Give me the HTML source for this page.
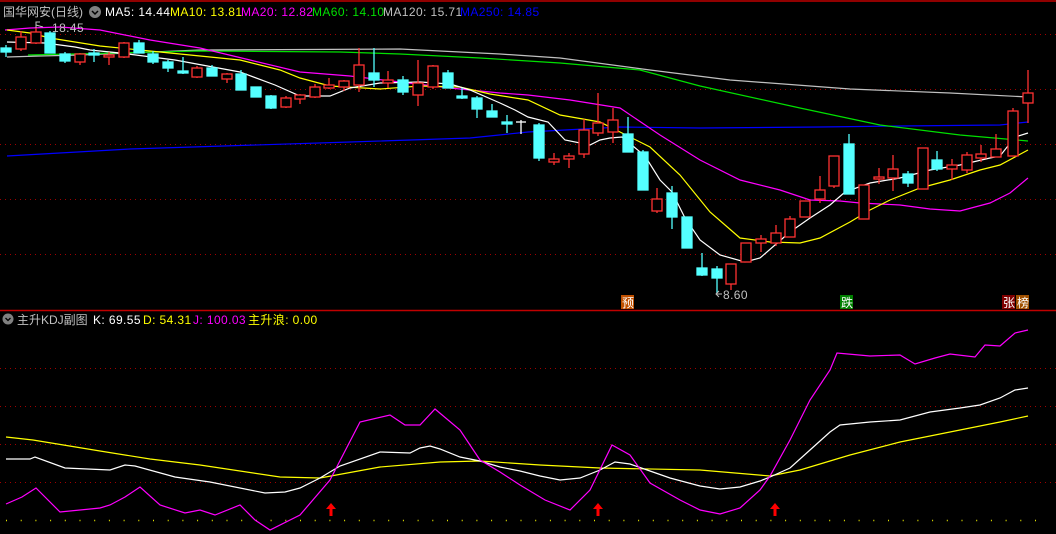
<!DOCTYPE html>
<html><head><meta charset="utf-8"><style>
html,body{margin:0;padding:0;background:#000;width:1056px;height:534px;overflow:hidden}
svg{display:block}
text{font-family:"Liberation Sans","Noto Sans CJK SC",sans-serif;font-size:12px;letter-spacing:0.4px}
</style></head><body>
<svg width="1056" height="534" viewBox="0 0 1056 534">
<rect width="1056" height="534" fill="#000"/>
<line x1="0" y1="1" x2="1056" y2="1" stroke="#c00000" stroke-width="1.5"/>
<line x1="0" y1="310.5" x2="1056" y2="310.5" stroke="#c00000" stroke-width="1.5"/>
<g stroke="#a00000" stroke-dasharray="1,4" stroke-width="1">
<line x1="0" y1="34.5" x2="1056" y2="34.5"/><line x1="0" y1="89.5" x2="1056" y2="89.5"/><line x1="0" y1="144.5" x2="1056" y2="144.5"/><line x1="0" y1="199.5" x2="1056" y2="199.5"/><line x1="0" y1="254.5" x2="1056" y2="254.5"/>
<line x1="0" y1="368.5" x2="1056" y2="368.5"/><line x1="0" y1="406.5" x2="1056" y2="406.5"/><line x1="0" y1="444.5" x2="1056" y2="444.5"/><line x1="0" y1="482.5" x2="1056" y2="482.5"/>
</g>
<line x1="6" y1="520.5" x2="1040" y2="520.5" stroke="#e0e000" stroke-dasharray="1,13.7" stroke-width="1.5"/>

<g fill="none" stroke-width="1.2">
<polyline stroke="#0000ff" points="7,156 130,149 350,142 470,138 528,132 620,127 700,128 820,127 900,126 1000,125 1028,122"/>
<polyline stroke="#c0c0c0" points="7,57 40,56 80,55 200,50 400,49 500,54 560,58 650,70 730,80 850,89 950,93 1028,97"/>
<polyline stroke="#00e000" points="28,55 200,51 340,52 400,54 480,58 560,63 640,70 700,86 800,108 880,125 960,135 1028,141"/>
<polyline stroke="#ff00ff" points="5,30 30,28 60,27 100,30 150,40 200,48 250,60 300,72 350,76 400,82 450,88 500,93 528,95 570,100 620,108 660,135 700,160 740,180 780,190 810,200 840,201 860,203 900,205 930,209 960,211 990,203 1010,193 1028,178"/>
<polyline stroke="#ffff00" points="7,30 30,33 50,38 100,46 160,52 240,60 280,70 300,78 330,86 380,89 420,86 460,87 490,94 528,100 560,115 600,122 620,132 650,147 680,175 710,212 740,238 770,242 800,243 820,238 850,222 870,210 890,200 920,188 950,180 980,170 1000,165 1028,150"/>
<polyline stroke="#ffffff" points="7,42 45,43 75,47 90,50 120,53 175,60 240,72 275,85 300,96 330,96 350,88 380,83 420,82 450,84 470,90 500,103 515,110 528,117 548,122 565,140 590,145 600,140 610,138 622,137 645,156 660,180 672,192 685,218 700,240 720,255 745,262 760,258 790,232 810,218 830,205 845,192 870,183 900,178 930,170 960,165 990,158 1000,156 1015,137 1028,133"/>
</g>

<g stroke-width="1.3">
<g stroke="#54ffff" fill="#54ffff">
<line x1="6" y1="45" x2="6" y2="57"/><rect x="1" y="48" width="10" height="4"/>
<line x1="50" y1="31" x2="50" y2="53"/><rect x="45" y="33" width="10" height="20"/>
<line x1="65" y1="52" x2="65" y2="63"/><rect x="60" y="54" width="10" height="7"/>
<line x1="94" y1="49" x2="94" y2="62"/><rect x="89" y="53" width="10" height="2"/>
<line x1="139" y1="40" x2="139" y2="53"/><rect x="134" y="43" width="10" height="10"/>
<line x1="153" y1="51" x2="153" y2="64"/><rect x="148" y="54" width="10" height="8"/>
<line x1="168" y1="60" x2="168" y2="72"/><rect x="163" y="62" width="10" height="6"/>
<line x1="183" y1="57" x2="183" y2="74"/><rect x="178" y="71" width="10" height="2"/>
<line x1="212" y1="65" x2="212" y2="76"/><rect x="207" y="68" width="10" height="8"/>
<line x1="241" y1="70" x2="241" y2="90"/><rect x="236" y="74" width="10" height="16"/>
<line x1="256" y1="87" x2="256" y2="97"/><rect x="251" y="87" width="10" height="10"/>
<line x1="271" y1="95" x2="271" y2="109"/><rect x="266" y="96" width="10" height="12"/>
<line x1="374" y1="48" x2="374" y2="87"/><rect x="369" y="73" width="10" height="7"/>
<line x1="403" y1="76" x2="403" y2="95"/><rect x="398" y="80" width="10" height="12"/>
<line x1="448" y1="70" x2="448" y2="88"/><rect x="443" y="73" width="10" height="15"/>
<line x1="462" y1="88" x2="462" y2="99"/><rect x="457" y="96" width="10" height="2"/>
<line x1="477" y1="96" x2="477" y2="118"/><rect x="472" y="98" width="10" height="11"/>
<line x1="492" y1="104" x2="492" y2="117"/><rect x="487" y="111" width="10" height="6"/>
<line x1="507" y1="115" x2="507" y2="133"/><rect x="502" y="122" width="10" height="2"/>
<line x1="539" y1="123" x2="539" y2="161"/><rect x="534" y="125" width="10" height="33"/>
<line x1="628" y1="117" x2="628" y2="152"/><rect x="623" y="134" width="10" height="18"/>
<line x1="643" y1="150" x2="643" y2="190"/><rect x="638" y="152" width="10" height="38"/>
<line x1="672" y1="186" x2="672" y2="229"/><rect x="667" y="193" width="10" height="24"/>
<line x1="687" y1="217" x2="687" y2="248"/><rect x="682" y="217" width="10" height="31"/>
<line x1="702" y1="253" x2="702" y2="276"/><rect x="697" y="268" width="10" height="7"/>
<line x1="717" y1="266" x2="717" y2="293"/><rect x="712" y="269" width="10" height="9"/>
<line x1="849" y1="134" x2="849" y2="194"/><rect x="844" y="144" width="10" height="50"/>
<line x1="908" y1="171" x2="908" y2="187"/><rect x="903" y="174" width="10" height="9"/>
<line x1="937" y1="151" x2="937" y2="171"/><rect x="932" y="160" width="10" height="9"/>
</g>
<g stroke="#ffffff"><line x1="521" y1="120" x2="521" y2="134"/><line x1="516" y1="122" x2="526" y2="122"/></g>
<g stroke="#ff3232" fill="#000">
<line x1="21" y1="31" x2="21" y2="51"/><rect x="16" y="37" width="10" height="12"/>
<line x1="36" y1="28" x2="36" y2="44"/><rect x="31" y="32" width="10" height="11"/>
<line x1="80" y1="53" x2="80" y2="65"/><rect x="75" y="54" width="10" height="8"/>
<line x1="109" y1="52" x2="109" y2="65"/><rect x="104" y="55" width="10" height="2"/>
<line x1="124" y1="42" x2="124" y2="58"/><rect x="119" y="43" width="10" height="14"/>
<line x1="197" y1="66" x2="197" y2="78"/><rect x="192" y="68" width="10" height="9"/>
<line x1="227" y1="73" x2="227" y2="83"/><rect x="222" y="74" width="10" height="5"/>
<line x1="286" y1="96" x2="286" y2="108"/><rect x="281" y="98" width="10" height="9"/>
<line x1="300" y1="94" x2="300" y2="104"/><rect x="295" y="95" width="10" height="4"/>
<line x1="315" y1="84" x2="315" y2="98"/><rect x="310" y="87" width="10" height="10"/>
<line x1="329" y1="78" x2="329" y2="89"/><rect x="324" y="85" width="10" height="3"/>
<line x1="344" y1="80" x2="344" y2="91"/><rect x="339" y="81" width="10" height="6"/>
<line x1="359" y1="48" x2="359" y2="92"/><rect x="354" y="65" width="10" height="20"/>
<line x1="388" y1="71" x2="388" y2="88"/><rect x="383" y="80" width="10" height="3"/>
<line x1="418" y1="60" x2="418" y2="106"/><rect x="413" y="83" width="10" height="12"/>
<line x1="433" y1="65" x2="433" y2="89"/><rect x="428" y="66" width="10" height="21"/>
<line x1="554" y1="153" x2="554" y2="165"/><rect x="549" y="159" width="10" height="3"/>
<line x1="569" y1="153" x2="569" y2="168"/><rect x="564" y="156" width="10" height="3"/>
<line x1="584" y1="119" x2="584" y2="158"/><rect x="579" y="130" width="10" height="24"/>
<line x1="598" y1="93" x2="598" y2="136"/><rect x="593" y="123" width="10" height="10"/>
<line x1="613" y1="108" x2="613" y2="143"/><rect x="608" y="120" width="10" height="12"/>
<line x1="657" y1="188" x2="657" y2="213"/><rect x="652" y="199" width="10" height="12"/>
<line x1="731" y1="264" x2="731" y2="290"/><rect x="726" y="264" width="10" height="20"/>
<line x1="746" y1="243" x2="746" y2="262"/><rect x="741" y="243" width="10" height="19"/>
<line x1="761" y1="235" x2="761" y2="252"/><rect x="756" y="239" width="10" height="4"/>
<line x1="776" y1="225" x2="776" y2="246"/><rect x="771" y="233" width="10" height="10"/>
<line x1="790" y1="216" x2="790" y2="237"/><rect x="785" y="219" width="10" height="18"/>
<line x1="805" y1="201" x2="805" y2="217"/><rect x="800" y="201" width="10" height="16"/>
<line x1="820" y1="176" x2="820" y2="203"/><rect x="815" y="190" width="10" height="9"/>
<line x1="834" y1="156" x2="834" y2="188"/><rect x="829" y="156" width="10" height="30"/>
<line x1="864" y1="185" x2="864" y2="219"/><rect x="859" y="185" width="10" height="34"/>
<line x1="879" y1="168" x2="879" y2="184"/><rect x="874" y="177" width="10" height="2"/>
<line x1="893" y1="155" x2="893" y2="191"/><rect x="888" y="169" width="10" height="9"/>
<line x1="923" y1="148" x2="923" y2="189"/><rect x="918" y="148" width="10" height="41"/>
<line x1="952" y1="159" x2="952" y2="180"/><rect x="947" y="165" width="10" height="4"/>
<line x1="967" y1="152" x2="967" y2="173"/><rect x="962" y="155" width="10" height="15"/>
<line x1="981" y1="145" x2="981" y2="162"/><rect x="976" y="154" width="10" height="4"/>
<line x1="996" y1="134" x2="996" y2="157"/><rect x="991" y="149" width="10" height="8"/>
<line x1="1013" y1="108" x2="1013" y2="156"/><rect x="1008" y="111" width="10" height="45"/>
<line x1="1028" y1="70" x2="1028" y2="123"/><rect x="1023" y="93" width="10" height="10"/>
</g>
</g>

<text x="3" y="16" fill="#c0c0c0" style="letter-spacing:0">国华网安(日线)</text>
<circle cx="95" cy="12" r="6" fill="#808080"/><path d="M92,11 L95,14 L98,11" stroke="#000" stroke-width="1.5" fill="none"/>
<text x="105" y="16" fill="#ffffff">MA5: 14.44</text>
<text x="170" y="16" fill="#ffff00">MA10: 13.81</text>
<text x="241" y="16" fill="#ff00ff">MA20: 12.82</text>
<text x="312" y="16" fill="#00e000">MA60: 14.10</text>
<text x="383" y="16" fill="#c0c0c0">MA120: 15.71</text>
<text x="460" y="16" fill="#0000ff">MA250: 14.85</text>
<path d="M36,28 L36,22 L40,22 M36,25 L43,27" stroke="#c0c0c0" fill="none"/>
<text x="52" y="32" fill="#c0c0c0">18.45</text>
<path d="M722,294 L716,294 M719,291 L716,294 L719,297" stroke="#c0c0c0" fill="none"/>
<text x="723" y="299" fill="#c0c0c0">8.60</text>
<rect x="621" y="295" width="13" height="14" fill="#c05000"/><text x="622" y="307" fill="#fff" style="letter-spacing:0">预</text>
<rect x="840" y="295" width="13" height="14" fill="#008000"/><text x="841" y="307" fill="#fff" style="letter-spacing:0">跌</text>
<rect x="1002" y="295" width="13" height="14" fill="#800000"/><text x="1003" y="307" fill="#fff" style="letter-spacing:0">张</text>
<rect x="1016" y="295" width="13" height="14" fill="#a05000"/><text x="1017" y="307" fill="#fff" style="letter-spacing:0">榜</text>

<circle cx="8" cy="319" r="5.5" fill="#808080"/><path d="M5.5,318 L8,320.5 L10.5,318" stroke="#000" stroke-width="1.3" fill="none"/>
<text x="17" y="324" fill="#c0c0c0" style="letter-spacing:0">主升KDJ副图</text>
<text x="93" y="324" fill="#ffffff">K: 69.55</text>
<text x="143" y="324" fill="#ffff00">D: 54.31</text>
<text x="193" y="324" fill="#ff00ff">J: 100.03</text>
<text x="248" y="324" fill="#ffff00">主升浪: 0.00</text>

<g fill="none" stroke-width="1.2">
<polyline stroke="#ffff00" points="6,437 33,440 100,451 150,459 200,465 280,477 320,478 380,467 440,462 480,461 540,465 600,468 700,470 770,476 800,470 850,455 900,442 950,432 1000,422 1028,416"/>
<polyline stroke="#ffffff" points="6,459 30,459 35,457 65,468 110,470 125,465 135,466 175,477 210,482 265,493 285,492 300,488 320,478 340,466 380,452 410,453 420,448 430,446 440,449 460,457 480,461 500,467 520,471 540,476 560,480 580,478 600,470 615,462 630,464 650,471 670,478 700,486 720,489 740,487 760,481 770,477 790,468 810,450 830,432 840,425 870,422 900,420 930,412 960,408 980,405 1000,398 1015,390 1028,388"/>
<polyline stroke="#ff00ff" points="6,504 22,497 36,488 60,512 100,508 110,505 125,497 140,487 160,505 185,513 200,510 215,515 240,505 255,520 270,530 300,515 330,480 360,422 390,415 405,425 420,425 435,409 460,430 480,460 500,472 520,485 545,500 570,510 590,490 612,445 630,455 650,483 680,500 700,510 720,514 740,508 760,490 770,476 790,440 810,400 830,370 837,353 870,356 900,355 915,364 935,358 950,354 975,357 985,345 1000,346 1015,333 1028,330"/>
</g>
<g fill="#ff0000">
<path d="M331,503 L326,509 L329.5,509 L329.5,516 L332.5,516 L332.5,509 L336,509 Z"/>
<path d="M598,503 L593,509 L596.5,509 L596.5,516 L599.5,516 L599.5,509 L603,509 Z"/>
<path d="M775,503 L770,509 L773.5,509 L773.5,516 L776.5,516 L776.5,509 L780,509 Z"/>
</g>
</svg>
</body></html>
